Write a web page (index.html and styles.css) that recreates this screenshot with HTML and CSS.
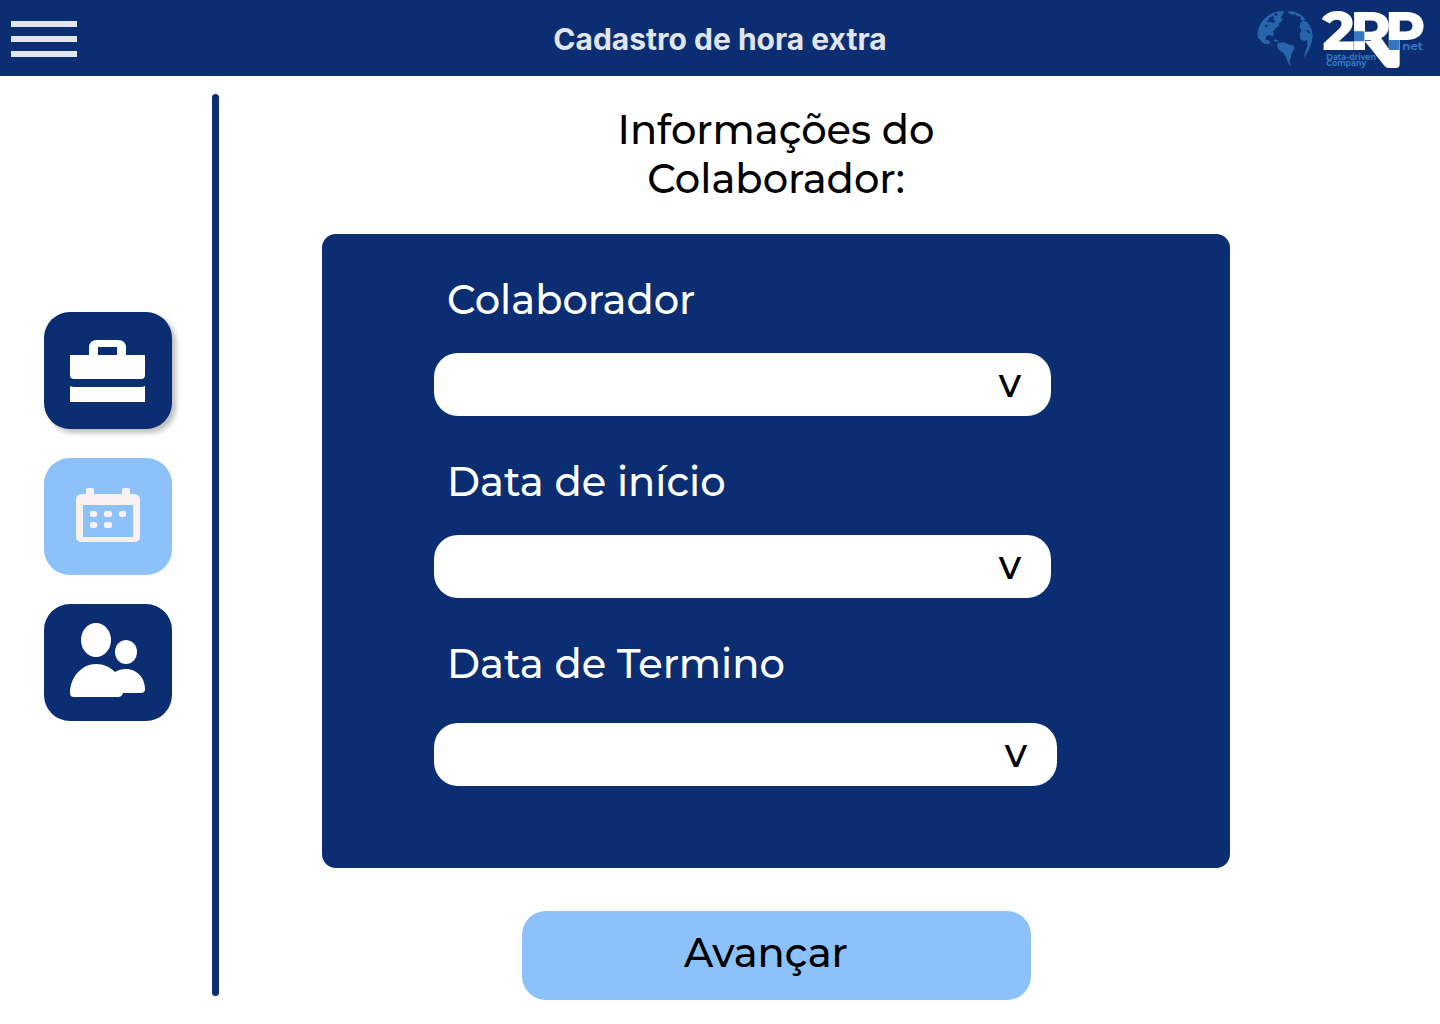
FILE: index.html
```html
<!DOCTYPE html>
<html lang="pt-BR">
<head>
<meta charset="utf-8">
<meta name="viewport" content="width=device-width, initial-scale=1">
<title>Cadastro de hora extra</title>
<link rel="stylesheet" href="styles.css">
</head>
<body>
<header class="topbar">
  <button class="menu" type="button" aria-label="Menu"><span class="menu-line"></span><span class="menu-line"></span><span class="menu-line"></span></button>
  <h1 class="topbar-title">Cadastro de hora extra</h1>
  <svg class="logo" viewBox="0 0 570 228" role="img" aria-label="2RP net">
    <g fill="#2765aa">
      <path d="M103 33 88 34 74 37 60 43 49 52 39 61 31 73 25 87 22 102 24 114 31 119 36 127 45 131 56 132 62 128 56 121 47 119 48 109 58 105 69 108 72 101 69 94 78 84 88 77 86 71 94 65 99 56 91 53 97 45Z"/>
      <path d="M111 35 125 34 141 38 155 46 166 57 161 64 150 57 154 51 143 49 136 43 125 44Z"/>
      <path d="M151 68 158 63 170 65 179 76 185 89 188 106 186 124 179 145 168 164 161 173 165 157 172 137 171 120 163 123 151 118 149 101 154 91 149 82Z"/>
      <path d="M84 129 101 127 113 132 132 137 132 148 124 162 122 174 119 182 122 198 115 190 108 172 101 159 86 149 81 138Z"/>
      <path d="M70 119 77 118 87 123 82 126 73 123ZM63 132 69 134 65 138Z"/>
    </g>
    <path d="M58 54 67 48 74 54 67 57 78 63 68 69 62 65 51 68ZM77 39 84 43 79 48 72 45ZM43 77 54 75 49 83ZM166 89 178 92 181 101 173 96Z" fill="#0b2d71"/>
    <path class="logo-tail" d="M343 122H372L417 150V138H449V192Q449 204 438 204H418Q408 204 403 197L364 148Z"/>
    <text class="logo-name" x="216" y="150">2</text>
    <text class="logo-name" x="301" y="150">R</text>
    <text class="logo-name" x="405" y="150">P</text>
    <path d="M312 94H343V124H312ZM417 120H449V150H417Z" fill="#3478bf"/>
    <text class="logo-net" x="457" y="150">net</text>
    <text class="logo-tag" x="229" y="181">Data-driven</text>
    <text class="logo-tag" x="229" y="199">Company</text>
  </svg>
</header>
<div class="layout">
  <nav class="sidebar" aria-label="Principal">
    <a class="tile tile-raised" href="#trabalho" aria-label="Trabalho">
      <svg class="tile-icon" viewBox="0 0 128 117" fill="#fff"><path fill-rule="evenodd" d="M26 43H45V36Q45 28 53 28H74Q82 28 82 36V43H101V63Q101 67 97 67H30Q26 67 26 63ZM54 35V43H73V35Z"/><path d="M26 74Q28 75 30 75H97Q99 75 101 74V90H26Z"/></svg>
    </a>
    <a class="tile tile-active" href="#calendario" aria-label="Calendário" aria-current="page">
      <svg class="tile-icon" viewBox="0 0 128 117" fill="#faf1f3"><path fill-rule="evenodd" d="M42 36V32Q42 30 44 30H48Q50 30 50 32V36H78V32Q78 30 80 30H84Q86 30 86 32V36H90Q96 36 96 42V79Q96 84 90 84H38Q32 84 32 79V42Q32 36 38 36H42ZM39 47V79H89V47Z"/><rect x="46" y="53" width="7" height="6" rx="2"/><rect x="60" y="53" width="8" height="6" rx="2"/><rect x="75" y="53" width="7" height="6" rx="2"/><rect x="46" y="64" width="7" height="6" rx="2"/><rect x="60" y="64" width="8" height="6" rx="2"/></svg>
    </a>
    <a class="tile" href="#equipe" aria-label="Equipe">
      <svg class="tile-icon" viewBox="0 0 128 117" fill="#fff"><ellipse cx="52" cy="36" rx="15" ry="17"/><ellipse cx="82" cy="48" rx="11" ry="12"/><path d="M52 60C60 60 66 63 71 68C74 66 78 65 82 65C93 65 101 74 101 85Q101 89 97 89H79Q78 93 74 93H30Q26 93 26 89C26 73 38 60 52 60Z"/></svg>
    </a>
  </nav>
  <div class="divider"></div>
  <main class="content">
    <form class="form">
      <h2 class="form-title">Informações do<br>Colaborador:</h2>
      <div class="panel">
        <div class="field">
          <label class="field-label" for="colaborador">Colaborador</label>
          <div class="picker"><select class="picker-select" id="colaborador"><option></option></select><span class="picker-arrow" aria-hidden="true">v</span></div>
        </div>
        <div class="field">
          <label class="field-label" for="inicio">Data de início</label>
          <div class="picker"><select class="picker-select" id="inicio"><option></option></select><span class="picker-arrow" aria-hidden="true">v</span></div>
        </div>
        <div class="field field-end">
          <label class="field-label" for="termino">Data de Termino</label>
          <div class="picker"><select class="picker-select" id="termino"><option></option></select><span class="picker-arrow" aria-hidden="true">v</span></div>
        </div>
      </div>
      <button class="submit" type="submit">Avançar</button>
    </form>
  </main>
</div>
</body>
</html>
```
FILE: styles.css
```css
* {
  box-sizing: border-box;
}

body {
  margin: 0;
  min-height: 100vh;
  display: flex;
  flex-direction: column;
  background: #fff;
  color: #000;
  font-family: Montserrat, Inter, sans-serif;
  font-size: 40px;
  font-weight: 500;
  line-height: 49px;
}

.topbar {
  display: grid;
  grid-template-columns: 1fr auto 1fr;
  align-items: center;
  height: 76px;
  background: #0b2d71;
}

.menu {
  display: grid;
  gap: 9px;
  width: 66px;
  margin-left: 11px;
  padding: 1px 0 0;
  border: 0;
  background: none;
}

.menu-line {
  height: 6px;
  background: #e1e5ee;
}

.topbar-title {
  margin: 0;
  padding-top: 2px;
  color: #e1e5ee;
  font-family: Inter, sans-serif;
  font-size: 30px;
  font-weight: 700;
  line-height: 36px;
}

.logo {
  justify-self: end;
  width: 190px;
  height: 76px;
  font-family: Montserrat, Inter, sans-serif;
}

.logo-tail,
.logo-name {
  fill: #fff;
}

.logo-name {
  font-size: 165px;
  font-weight: 800;
}

.logo-net,
.logo-tag {
  fill: #3478bf;
  font-weight: 700;
}

.logo-net {
  font-size: 35px;
}

.logo-tag {
  font-size: 24px;
}

.layout {
  display: flex;
  flex: 1;
}

.sidebar {
  display: flex;
  flex-direction: column;
  gap: 29px;
  width: 212px;
  padding: 236px 40px 0 44px;
}

.tile {
  height: 117px;
  border-radius: 26px;
  background: #0b2d71;
}

.tile-raised {
  box-shadow: 4px 4px 5px rgba(0, 0, 0, 0.25);
}

.tile-active {
  background: #8cc1fa;
}

.tile-icon {
  display: block;
  width: 128px;
  height: 117px;
}

.divider {
  width: 7px;
  margin: 18px 0 28px;
  border-radius: 4px;
  background: #0b2d71;
}

.content {
  flex: 1;
  padding: 29px 210px 24px 103px;
}

.form {
  display: flex;
  flex-direction: column;
}

.form-title {
  margin: 0 0 31px;
  font-size: 40px;
  font-weight: 500;
  text-align: center;
}

.panel {
  display: flex;
  flex-direction: column;
  gap: 41px;
  padding: 41px 173px 82px 112px;
  border-radius: 14px;
  background: #0b2d71;
}

.field {
  display: flex;
  flex-direction: column;
  gap: 29px;
  padding-right: 6px;
}

.field-end {
  gap: 35px;
  padding-right: 0;
}

.field-label {
  padding-left: 13px;
  color: #fff;
}

.picker {
  position: relative;
}

.picker-select {
  display: block;
  width: 100%;
  height: 63px;
  padding: 0 64px 0 24px;
  border: 0;
  border-radius: 24px;
  appearance: none;
  background: #fff;
  color: #000;
  font: inherit;
}

.picker-arrow {
  position: absolute;
  top: 5px;
  right: 30px;
  pointer-events: none;
}

.submit {
  align-self: center;
  width: 509px;
  height: 89px;
  margin-top: 43px;
  padding: 0 20px 6px 0;
  border: 0;
  border-radius: 24px;
  background: #8cc1fa;
  color: #000;
  font: inherit;
}
```
